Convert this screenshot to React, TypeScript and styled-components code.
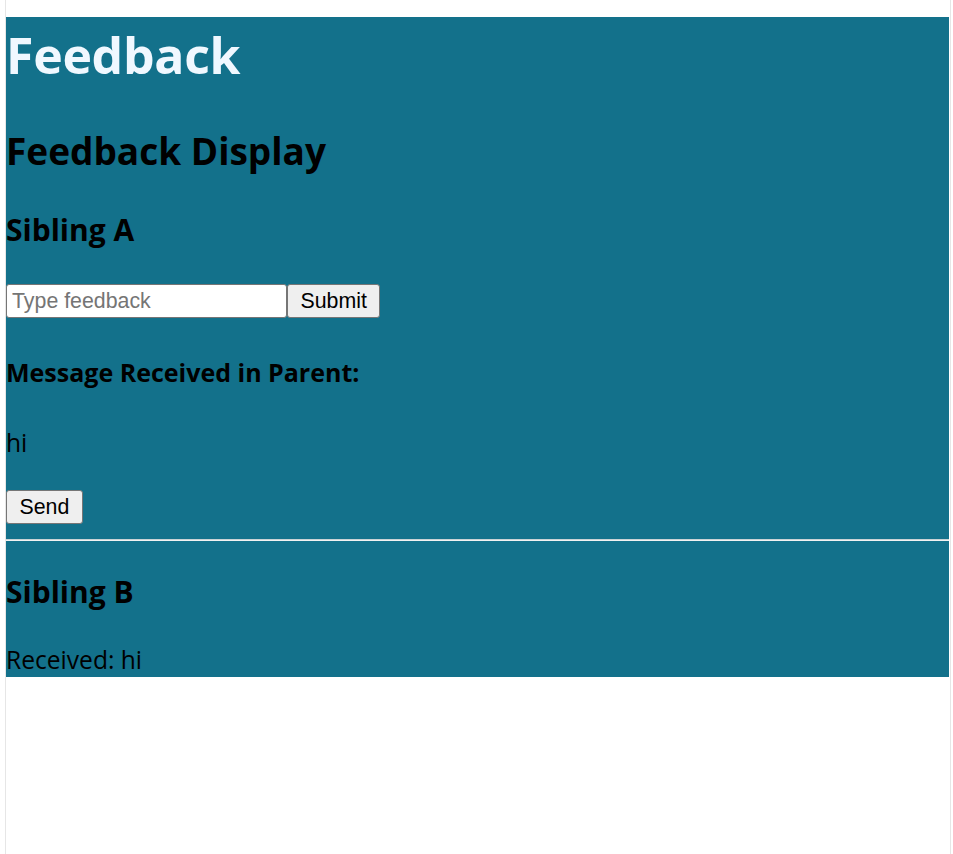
import React, { useState } from "react";
import styled, { createGlobalStyle } from "styled-components";

const GlobalStyle = createGlobalStyle`
  html, body {
    margin: 0;
    padding: 0;
    background: #ffffff;
  }
  body {
    font-family: "Open Sans", "Noto Sans", sans-serif;
    color: #000000;
  }
`;

const Frame = styled.div`
  box-sizing: border-box;
  margin-left: 5px;
  width: 946px;
  min-height: 854px;
  padding-top: 17px;
  border-left: 1px solid #e6e6e6;
  border-right: 1px solid #e6e6e6;
`;

const Panel = styled.main`
  display: flex;
  flex-direction: column;
  align-items: flex-start;
  width: 943px;
  background: #13718b;
  padding-bottom: 5px;
`;

const Title = styled.h1`
  margin: 13px 0 0;
  font-size: 50px;
  line-height: 50px;
  font-weight: 700;
  color: #f0f8ff;
  letter-spacing: -0.3px;
`;

const SectionHeading = styled.h2`
  margin: 52px 0 0;
  font-size: 37px;
  line-height: 37px;
  font-weight: 700;
`;

const SiblingHeading = styled.h3<{ $top: number }>`
  margin: ${(p) => p.$top}px 0 0;
  font-size: 30px;
  line-height: 30px;
  font-weight: 700;
`;

const FormRow = styled.form`
  display: flex;
  margin: 39px 0 0;
`;

const FeedbackInput = styled.input`
  box-sizing: border-box;
  width: 281px;
  height: 34px;
  margin: 0;
  padding: 0 5px;
  border: 1px solid #767676;
  border-radius: 3px;
  background: #ffffff;
  font-family: "Liberation Sans", Arial, sans-serif;
  font-size: 21.33px;
  color: #000;
  &::placeholder {
    color: #757575;
  }
`;

const Button = styled.button<{ $top?: number }>`
  box-sizing: border-box;
  height: 34px;
  margin: ${(p) => p.$top ?? 0}px 0 0;
  padding: 0 12.5px;
  border: 1px solid #767676;
  border-radius: 3px;
  background: #efefef;
  font-family: "Liberation Sans", Arial, sans-serif;
  font-size: 21.33px;
  color: #000;
`;

const MessageLabel = styled.h4`
  margin: 42px 0 0;
  font-size: 25px;
  line-height: 24px;
  font-weight: 700;
`;

const Message = styled.p<{ $top: number }>`
  margin: ${(p) => p.$top}px 0 0;
  font-size: 24.6px;
  line-height: 24px;
  font-weight: 400;
`;

const Divider = styled.hr`
  align-self: stretch;
  box-sizing: border-box;
  height: 2px;
  margin: 15px 0 0;
  border: 0;
  border-top: 1px solid #c9d2d5;
  border-bottom: 1px solid #f2f2f2;
`;

const SiblingSection = styled.section`
  display: flex;
  flex-direction: column;
  align-items: flex-start;
`;

export default function App() {
  const [value, setValue] = useState("");
  const [parentMsg, setParentMsg] = useState("hi");
  const [received, setReceived] = useState("hi");

  return (
    <>
      <GlobalStyle />
      <Frame>
        <Panel>
          <Title>Feedback</Title>
          <SectionHeading>Feedback Display</SectionHeading>
          <SiblingSection>
            <SiblingHeading $top={46}>Sibling A</SiblingHeading>
            <FormRow
              onSubmit={(e) => {
                e.preventDefault();
                if (value) setParentMsg(value);
              }}
            >
              <FeedbackInput
                placeholder="Type feedback"
                value={value}
                onChange={(e) => setValue(e.target.value)}
              />
              <Button type="submit">Submit</Button>
            </FormRow>
            <MessageLabel>Message Received in Parent:</MessageLabel>
            <Message $top={47}>{parentMsg}</Message>
            <Button $top={35} type="button" onClick={() => setReceived(parentMsg)}>
              Send
            </Button>
          </SiblingSection>
          <Divider />
          <SiblingSection>
            <SiblingHeading $top={36}>Sibling B</SiblingHeading>
            <Message $top={41}>Received: {received}</Message>
          </SiblingSection>
        </Panel>
      </Frame>
    </>
  );
}
